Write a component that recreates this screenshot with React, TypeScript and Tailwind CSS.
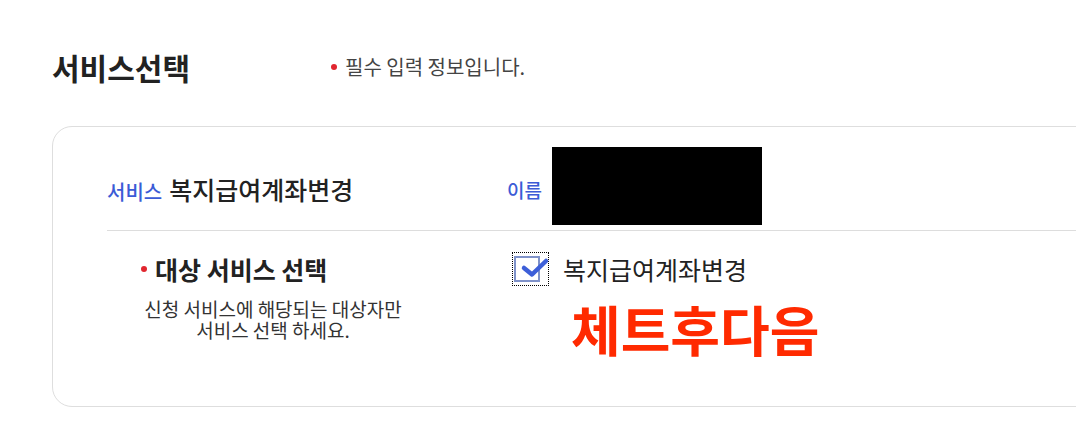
const FONT = { fontFamily: '"Noto Sans CJK KR", "Noto Sans", sans-serif' };

const RedDot = () => (
  <span className="inline-block w-[6px] h-[6px] rounded-full bg-[#e1262f]" />
);

const CheckBox = () => (
  <span className="flex items-center w-[37px] h-[34px] border border-dotted border-black">
    <span className="relative ml-[1px] w-[26px] h-[26px] border-2 border-[#7f92c9] bg-white">
      <svg
        className="absolute left-[-2px] top-[-2px] overflow-visible"
        width="36"
        height="26"
        viewBox="0 0 36 26"
      >
        <path
          d="M10 12 L18 18.5 L32 5"
          fill="none"
          stroke="#3d5fd8"
          strokeWidth="4.5"
          strokeLinecap="round"
          strokeLinejoin="round"
        />
      </svg>
    </span>
  </span>
);

export default function App() {
  return (
    <div className="w-[1076px] h-[442px] overflow-hidden bg-white" style={FONT}>
      <div className="pl-[52px] pt-[44px]">
        <div className="flex items-center h-[46px]">
          <h2 className="w-[279px] text-[30px] font-bold leading-none text-[#222]">
            서비스선택
          </h2>
          <div className="flex items-center gap-[8px]">
            <RedDot />
            <span className="text-[20px] text-[#444] leading-none">필수 입력 정보입니다.</span>
          </div>
        </div>

        <div className="mt-[36px] w-[1100px] h-[281px] border border-[#dedede] rounded-[20px] pl-[54px]">
          <div className="flex items-center pt-[20px] pb-[5px] border-b border-[#dddddd]">
            <div className="w-[400px] mt-[6px] flex items-baseline leading-none">
              <span className="text-[20px] font-medium text-[#3b5bd6]">서비스</span>
              <span className="ml-[7px] text-[25px] font-medium text-[#222]">복지급여계좌변경</span>
            </div>
            <span className="mt-[6px] text-[19px] font-medium text-[#3b5bd6] leading-none">이름</span>
            <div className="ml-[10px] w-[210px] h-[78px] bg-black" />
          </div>

          <div className="grid grid-cols-[400px_1fr] pt-[21px]">
            <div>
              <div className="flex items-center h-[34px] pl-[34px] gap-[8px]">
                <RedDot />
                <span className="text-[25px] font-bold text-[#222] leading-none">대상 서비스 선택</span>
              </div>
              <p className="mt-[12px] w-[332px] text-center text-[19px] leading-[21px] text-[#333]">
                신청 서비스에 해당되는 대상자만
                <br />
                서비스 선택 하세요.
              </p>
            </div>
            <div>
              <div className="flex items-center h-[34px] pl-[5px] gap-[14px]">
                <CheckBox />
                <span className="text-[25px] text-[#222] leading-none">복지급여계좌변경</span>
              </div>
              <div className="mt-[16px] ml-[64px] text-[54px] font-bold leading-none text-[#ff2a00]">
                체트후다음
              </div>
            </div>
          </div>
        </div>
      </div>
    </div>
  );
}
